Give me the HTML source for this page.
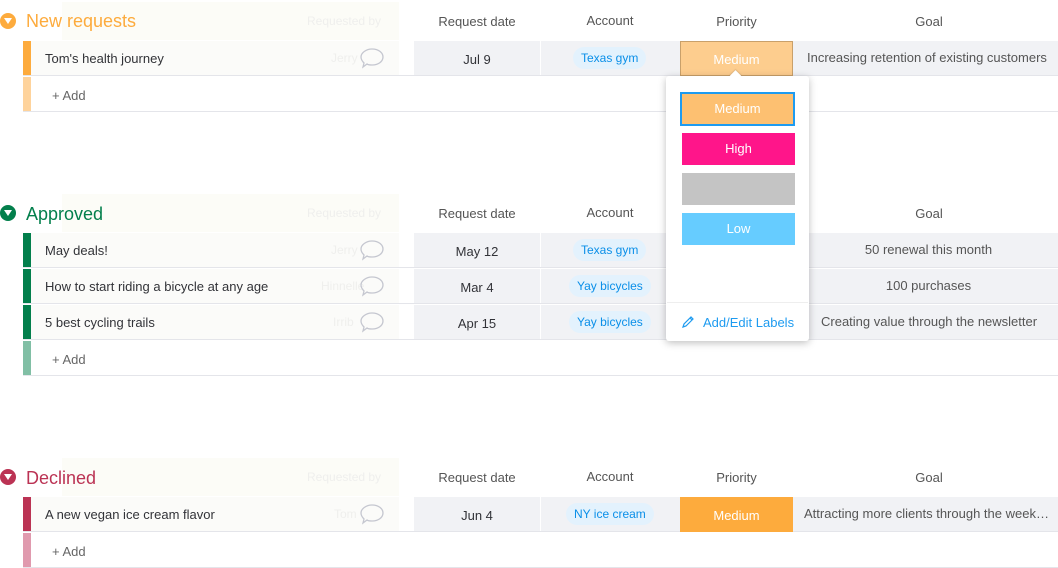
<!DOCTYPE html>
<html><head><meta charset="utf-8"><style>
*{margin:0;padding:0;box-sizing:border-box}
body{width:1058px;height:565px;overflow:hidden;background:#fff;font-family:"Liberation Sans",Arial,sans-serif;position:relative;color:#323338}
.a{position:absolute}
.t{position:absolute;font-size:13px;white-space:nowrap}
.c{text-align:center}
.hdrbg{position:absolute;left:62px;width:337px;height:38px;background:#fcfcf7}
.title{position:absolute;left:26px;font-size:18px}
.tri{position:absolute;left:0;width:16px;height:16px;border-radius:50%}
.tri:after{content:"";position:absolute;left:4px;top:5px;border-left:4px solid transparent;border-right:4px solid transparent;border-top:6px solid #fff}
.colh{position:absolute;font-size:13px;color:#555;text-align:center}
.row{position:absolute;left:23px;width:1035px;height:35px;border-bottom:1px solid #e4e5ea}
.bar{position:absolute;left:0;top:0;width:8px;height:100%}
.name{position:absolute;left:8px;top:0;width:368px;height:100%;background:#fbfbf9}
.grey{position:absolute;left:391px;top:0;width:644px;height:100%;background:#f1f2f5}
.sep{position:absolute;top:0;width:1px;height:100%;background:#fff}
.pill{position:absolute;height:22px;line-height:22px;padding:0 8px;border-radius:11px;background:#e3f2fd;color:#0a8fe8;font-size:12px}
.ghost{position:absolute;font-size:12px;color:#efefed}
.add{position:absolute;left:23px;width:1035px;height:35px;border-bottom:1px solid #e4e5ea}
.lbl{position:absolute;width:113px;height:32px;line-height:32px;text-align:center;color:#fff;font-size:13px}
</style></head><body>

<div class="hdrbg" style="top:2px"></div>
<div class="tri" style="top:13px;background:#fdab3d"></div>
<div class="title" style="top:11px;color:#fdab3d">New requests</div>
<div class="ghost" style="left:307px;top:14px">Requested by</div>
<div class="colh" style="left:414px;width:126px;top:14px">Request date</div>
<div class="colh" style="left:540px;width:140px;top:13px">Account</div>
<div class="colh" style="left:680px;width:113px;top:14px">Priority</div>
<div class="colh" style="left:800px;width:258px;top:14px">Goal</div>

<div class="row" style="top:41px">
<div class="bar" style="background:#fdab3d"></div><div class="name"></div><div class="grey"></div>
<div class="sep" style="left:517px"></div>
<div class="t" style="left:22px;top:10px">Tom's health journey</div>
<div class="ghost" style="left:308px;top:10px">Jerry</div>
<div class="t c" style="left:391px;width:126px;top:11px">Jul 9</div>
<div class="pill" style="left:550px;top:6px">Texas gym</div>
<div class="a" style="left:657px;top:0;width:113px;height:35px;background:#fdcd8e;border:1px solid #c9a06a"></div>
<div class="t c" style="left:657px;width:113px;top:11px;color:#fff">Medium</div>
<div class="t" style="left:784px;top:9px;color:#555">Increasing retention of existing customers</div>
</div>
<div class="add" style="top:77px"><div class="bar" style="background:#fed39c"></div><div class="t" style="left:29px;top:11px;color:#666">+ Add</div></div>

<div class="hdrbg" style="top:194px"></div>
<div class="tri" style="top:205px;background:#037f4c"></div>
<div class="title" style="top:204px;color:#037f4c">Approved</div>
<div class="ghost" style="left:307px;top:206px">Requested by</div>
<div class="colh" style="left:414px;width:126px;top:206px">Request date</div>
<div class="colh" style="left:540px;width:140px;top:205px">Account</div>
<div class="colh" style="left:800px;width:258px;top:206px">Goal</div>

<div class="row" style="top:233px"><div class="bar" style="background:#037f4c"></div><div class="name"></div><div class="grey"></div><div class="sep" style="left:517px"></div>
<div class="t" style="left:22px;top:10px">May deals!</div><div class="ghost" style="left:308px;top:10px">Jerry</div>
<div class="t c" style="left:391px;width:126px;top:11px">May 12</div>
<div class="pill" style="left:550px;top:6px">Texas gym</div>
<div class="t c" style="left:770px;width:271px;top:9px;color:#555">50 renewal this month</div></div>

<div class="row" style="top:269px"><div class="bar" style="background:#037f4c"></div><div class="name"></div><div class="grey"></div><div class="sep" style="left:517px"></div>
<div class="t" style="left:22px;top:10px">How to start riding a bicycle at any age</div><div class="ghost" style="left:298px;top:10px">Hinnelle</div>
<div class="t c" style="left:391px;width:126px;top:11px">Mar 4</div>
<div class="pill" style="left:546px;top:6px">Yay bicycles</div>
<div class="t c" style="left:770px;width:271px;top:9px;color:#555">100 purchases</div></div>

<div class="row" style="top:305px"><div class="bar" style="background:#037f4c"></div><div class="name"></div><div class="grey"></div><div class="sep" style="left:517px"></div>
<div class="t" style="left:22px;top:10px">5 best cycling trails</div><div class="ghost" style="left:310px;top:10px">Irrib</div>
<div class="t c" style="left:391px;width:126px;top:11px">Apr 15</div>
<div class="pill" style="left:546px;top:6px">Yay bicycles</div>
<div class="t" style="left:798px;top:9px;color:#555">Creating value through the newsletter</div></div>
<div class="add" style="top:341px"><div class="bar" style="background:#81bfa5"></div><div class="t" style="left:29px;top:11px;color:#666">+ Add</div></div>

<div class="hdrbg" style="top:458px"></div>
<div class="tri" style="top:469px;background:#bb3354"></div>
<div class="title" style="top:468px;color:#bb3354">Declined</div>
<div class="ghost" style="left:307px;top:470px">Requested by</div>
<div class="colh" style="left:414px;width:126px;top:470px">Request date</div>
<div class="colh" style="left:540px;width:140px;top:469px">Account</div>
<div class="colh" style="left:680px;width:113px;top:470px">Priority</div>
<div class="colh" style="left:800px;width:258px;top:470px">Goal</div>

<div class="row" style="top:497px"><div class="bar" style="background:#bb3354"></div><div class="name"></div><div class="grey"></div><div class="sep" style="left:517px"></div>
<div class="t" style="left:22px;top:10px">A new vegan ice cream flavor</div><div class="ghost" style="left:311px;top:10px">Tom</div>
<div class="t c" style="left:391px;width:126px;top:11px">Jun 4</div>
<div class="pill" style="left:543px;top:6px">NY ice cream</div>
<div class="a" style="left:657px;top:0;width:113px;height:35px;background:#fdab3d"></div>
<div class="t c" style="left:657px;width:113px;top:11px;color:#fff">Medium</div>
<div class="t" style="left:781px;top:9px;color:#555">Attracting more clients through the week…</div></div>
<div class="add" style="top:533px"><div class="bar" style="background:#e09aae"></div><div class="t" style="left:29px;top:11px;color:#666">+ Add</div></div>

<svg class="a" style="left:0;top:0" width="1058" height="565">
<g fill="none" stroke="#c5c7d0" stroke-width="1.3">
<path id="b" d="M372 49 c7 0 11 4 11 8 s-4 8 -11 8 c-2 0 -4 0 -5 -1 l-4 3 l1 -4 c-2 -2 -3 -4 -3 -6 c0 -4 5 -8 11 -8z"/>
<use href="#b" y="192"/><use href="#b" y="228"/><use href="#b" y="264"/><use href="#b" y="456"/>
</g></svg>

<div class="a" style="left:666px;top:76px;width:143px;height:265px;background:#fff;border-radius:3px;box-shadow:0 2px 8px rgba(0,0,0,.25)"></div>
<div class="a" style="left:731px;top:72px;width:9px;height:9px;background:#fff;transform:rotate(45deg);box-shadow:-1px -1px 1px rgba(0,0,0,.1)"></div>
<div class="lbl" style="left:680px;top:92px;width:115px;height:34px;background:#fdc071;border:2px solid #1e9bf0;line-height:30px">Medium</div>
<div class="lbl" style="left:682px;top:133px;background:#ff158a">High</div>
<div class="lbl" style="left:682px;top:173px;background:#c4c4c4"></div>
<div class="lbl" style="left:682px;top:213px;background:#66ccff">Low</div>
<div class="a" style="left:667px;top:302px;width:141px;height:1px;background:#eee"></div>
<svg class="a" style="left:681px;top:315px" width="14" height="14"><path d="M2 12 l1 -3 l7 -7 l2 2 l-7 7z M9 3 l2 2" fill="none" stroke="#1e9bf0" stroke-width="1.2"/></svg>
<div class="t" style="left:703px;top:315px;color:#1e9bf0">Add/Edit Labels</div>
</body></html>
